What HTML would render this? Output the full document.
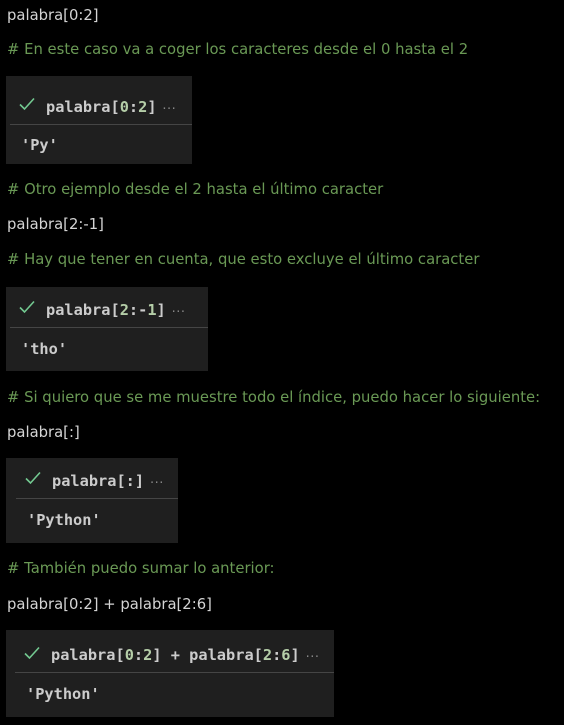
<!DOCTYPE html><html><head><style>
body{margin:0;width:564px;height:725px;background:#000;position:relative;overflow:hidden;font-family:"DejaVu Sans","Liberation Sans",sans-serif;font-size:14.8px;color:#d4d4d4}
.t{position:absolute;left:7px;line-height:18px;white-space:nowrap}
.c{color:#6a9955}
.b{position:absolute;left:6px;background:#1f1f1f}
.sep{position:absolute;right:0;height:1px;background:#454545}
.m{position:absolute;font-family:"DejaVu Sans Mono","Liberation Mono",monospace;font-weight:bold;font-size:15.3px;color:#cccccc;line-height:18px;white-space:nowrap}
.n{color:#b5cea8}
.d{color:#888;font-weight:normal;font-size:11px;letter-spacing:-2px}
svg{position:absolute}
</style></head><body>
<div class="t" style="top:7px">palabra[0:2]</div>
<div class="t c" style="top:41px"># En este caso va a coger los caracteres desde el 0 hasta el 2</div>
<div class="b" style="top:76px;width:186px;height:88px">
<svg style="left:13px;top:21px" width="16" height="14" viewBox="0 0 16 14"><path d="M1 7.5 L5.5 12 L15 1.5" stroke="#73c991" stroke-width="1.6" fill="none"/></svg>
<div class="m" style="left:40px;top:22px">palabra[<span class="n">0</span>:<span class="n">2</span>]<span class="d"> ···</span></div>
<div class="sep" style="left:4px;top:48px"></div>
<div class="m" style="left:15px;top:60px">'Py'</div></div>
<div class="t c" style="top:181px"># Otro ejemplo desde el 2 hasta el último caracter</div>
<div class="t" style="top:216px">palabra[2:-1]</div>
<div class="t c" style="top:251px"># Hay que tener en cuenta, que esto excluye el último caracter</div>
<div class="b" style="top:287px;width:202px;height:84px">
<svg style="left:13px;top:13px" width="16" height="14" viewBox="0 0 16 14"><path d="M1 7.5 L5.5 12 L15 1.5" stroke="#73c991" stroke-width="1.6" fill="none"/></svg>
<div class="m" style="left:40px;top:14px">palabra[<span class="n">2</span>:-<span class="n">1</span>]<span class="d"> ···</span></div>
<div class="sep" style="left:4px;top:40px"></div>
<div class="m" style="left:15px;top:53px">'tho'</div></div>
<div class="t c" style="top:389px"># Si quiero que se me muestre todo el índice, puedo hacer lo siguiente:</div>
<div class="t" style="top:424px">palabra[:]</div>
<div class="b" style="top:458px;width:172px;height:85px">
<svg style="left:19px;top:13px" width="16" height="14" viewBox="0 0 16 14"><path d="M1 7.5 L5.5 12 L15 1.5" stroke="#73c991" stroke-width="1.6" fill="none"/></svg>
<div class="m" style="left:46px;top:14px">palabra[:]<span class="d"> ···</span></div>
<div class="sep" style="left:10px;top:40px"></div>
<div class="m" style="left:21px;top:53px">'Python'</div></div>
<div class="t c" style="top:560px"># También puedo sumar lo anterior:</div>
<div class="t" style="top:596px">palabra[0:2] + palabra[2:6]</div>
<div class="b" style="top:630px;width:328px;height:87px">
<svg style="left:18px;top:16px" width="16" height="14" viewBox="0 0 16 14"><path d="M1 7.5 L5.5 12 L15 1.5" stroke="#73c991" stroke-width="1.6" fill="none"/></svg>
<div class="m" style="left:45px;top:16px">palabra[<span class="n">0</span>:<span class="n">2</span>] + palabra[<span class="n">2</span>:<span class="n">6</span>]<span class="d"> ···</span></div>
<div class="sep" style="left:9px;top:42px"></div>
<div class="m" style="left:20px;top:55px">'Python'</div></div>
</body></html>
